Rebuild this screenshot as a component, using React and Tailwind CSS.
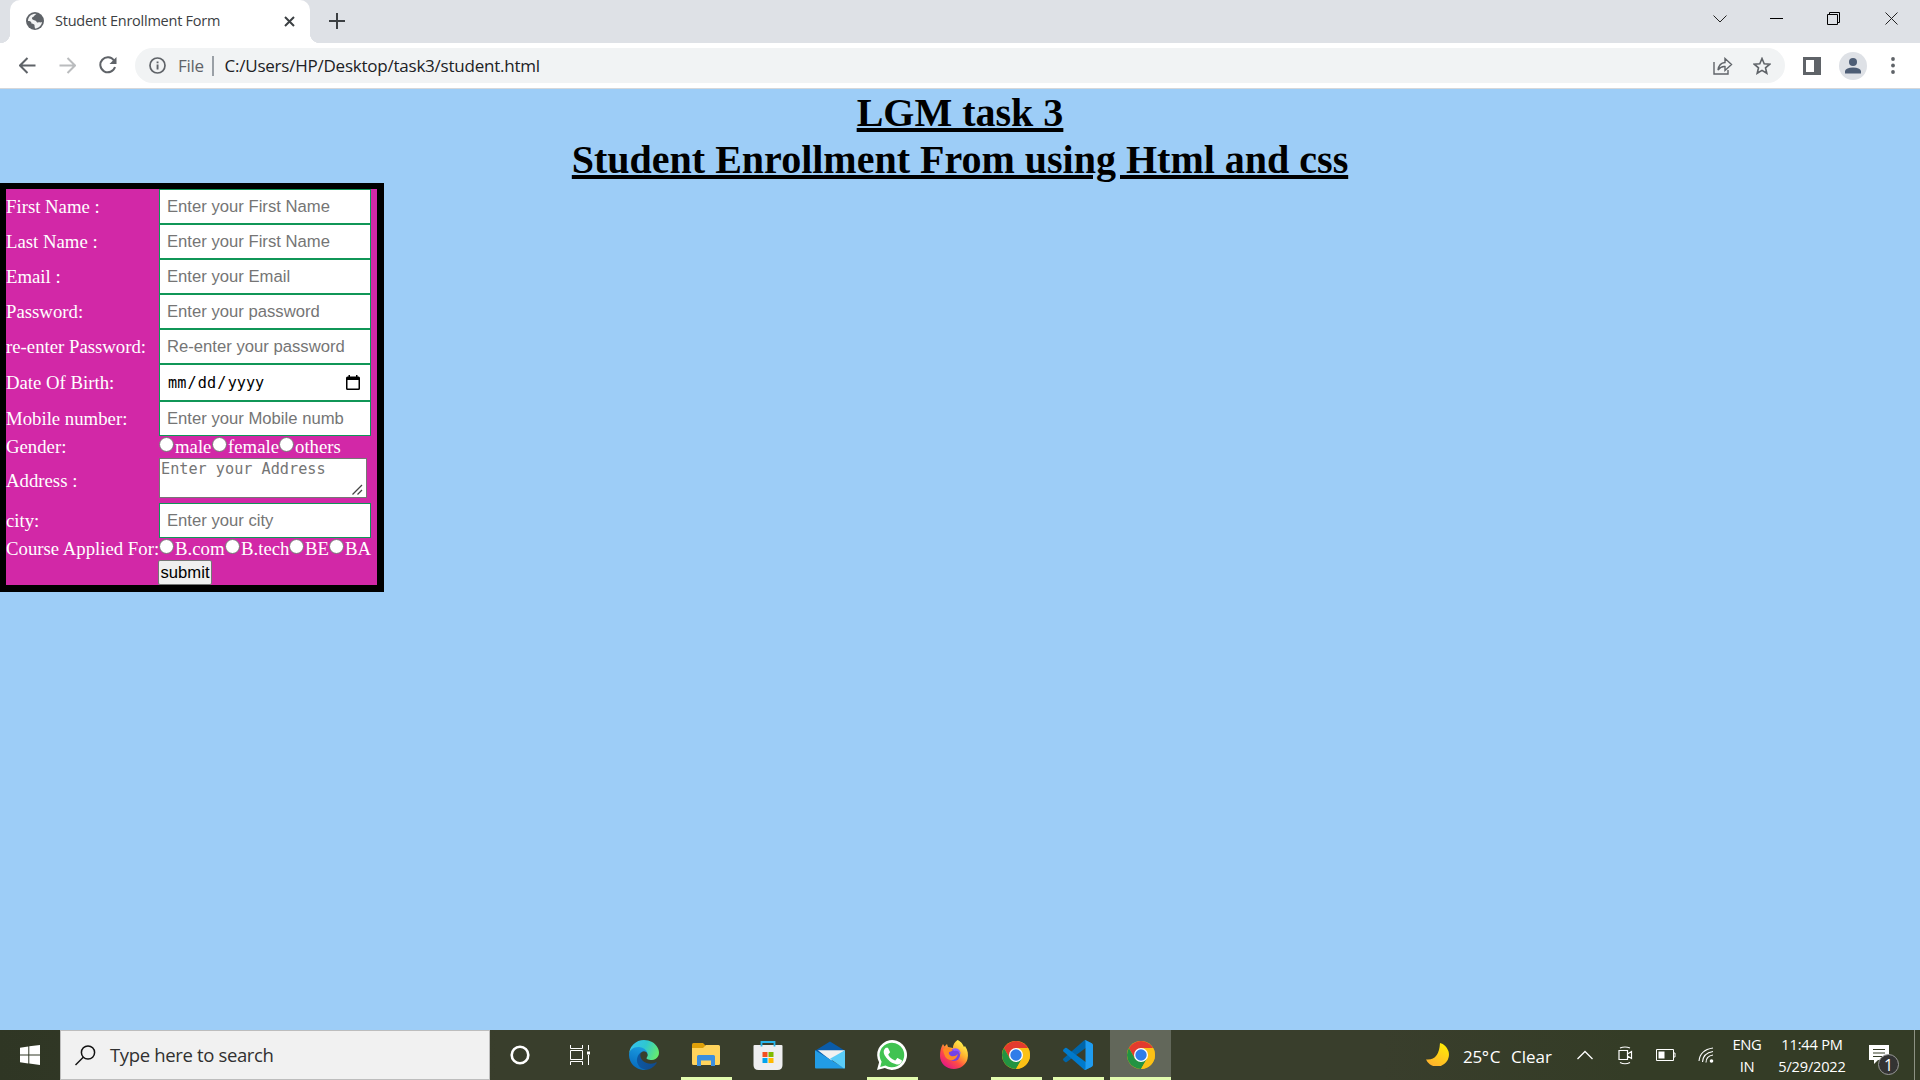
import React from "react";

const ui = "font-['Open_Sans','Noto_Sans',sans-serif]";

const field =
  "block h-[35px] w-[212px] border border-[#109657] bg-white pl-[7px] pr-[7px] font-['Liberation_Sans',Arial,sans-serif] text-[16.67px] placeholder:text-[#757575] outline-none rounded-none";

function Label({ children }) {
  return <div className="w-[153px] shrink-0 whitespace-nowrap">{children}</div>;
}

function Row({ label, placeholder }) {
  return (
    <div className="flex h-[35px] items-center">
      <Label>{label}</Label>
      <input className={field} placeholder={placeholder} />
    </div>
  );
}

function Radio({ text, width }) {
  return (
    <label className="flex shrink-0 items-start" style={{ width }}>
      <span className="mt-px mr-px h-[15px] w-[15px] shrink-0 rounded-full border border-[#767676] bg-white" />
      <span className="whitespace-nowrap leading-[22px]">{text}</span>
    </label>
  );
}

function Form() {
  return (
    <form className="h-[409px] w-[384px] border-[6px] border-r-[7px] border-b-[7px] border-black bg-[#d228a7] font-['Liberation_Serif','Times_New_Roman',serif] text-[18.75px] leading-[22px] text-white">
      <Row label="First Name :" placeholder="Enter your First Name" />
      <Row label="Last Name :" placeholder="Enter your First Name" />
      <Row label="Email :" placeholder="Enter your Email" />
      <Row label="Password:" placeholder="Enter your password" />
      <Row label="re-enter Password:" placeholder="Re-enter your password" />
      <div className="flex h-[37px] items-center">
        <Label>Date Of Birth:</Label>
        <div className="flex h-[37px] w-[212px] items-center justify-between border border-[#109657] bg-white pl-2 pr-[10px] text-black">
          <span className="font-['DejaVu_Sans_Mono',monospace] text-[15.2px]">
            mm<span className="mx-[1.2px]">/</span>dd<span className="mx-[1.2px]">/</span>yyyy
          </span>
          <svg width="14" height="15" viewBox="0 0 14 15" className="-mt-px">
            <path d="M2.500 0h1.500v1.500h6V0h1.500v1.500H12.500Q14 1.500 14 3V13.500Q14 15 12.500 15H1.500Q0 15 0 13.500V3Q0 1.500 1.500 1.500H2.500ZM1.500 5V13.500H12.500V5Z" fill="#000" fillRule="evenodd" />
          </svg>
        </div>
      </div>
      <Row label="Mobile number:" placeholder="Enter your Mobile numb" />
      <div className="flex h-[22px] items-center">
        <Label>Gender:</Label>
        <Radio text="male" width={53} />
        <Radio text="female" width={67} />
        <Radio text="others" width={60} />
      </div>
      <div className="flex h-[45px] items-start">
        <Label><span className="block pt-3">Address :</span></Label>
        <div className="flex h-[40px] w-[208px] items-start justify-between border border-[#767676] bg-white pl-px font-['DejaVu_Sans_Mono',monospace] text-[15.2px] leading-[20px] text-[#757575]">
          <span className="whitespace-nowrap">Enter your Address</span>
          <svg width="11" height="11" viewBox="0 0 11 11" className="mr-[3px] mt-[25px] shrink-0">
            <path d="M.5 10.500 10 1M5.500 10.500 10 6" stroke="#444" strokeWidth="1.300" fill="none" />
          </svg>
        </div>
      </div>
      <Row label="city:" placeholder="Enter your city" />
      <div className="flex h-[22px] items-center">
        <Label>Course Applied For:</Label>
        <Radio text="B.com" width={66} />
        <Radio text="B.tech" width={64} />
        <Radio text="BE" width={40} />
        <Radio text="BA" width={42} />
      </div>
      <button type="button" className="ml-[152px] block h-[25px] w-[54px] rounded-[2px] border border-[#767676] bg-[#efefef] text-center font-['Liberation_Sans',Arial,sans-serif] text-[16.67px] leading-[23px] text-black">
        submit
      </button>
    </form>
  );
}

function Chrome() {
  return (
    <svg width="28" height="28" viewBox="0 0 28 28">
      <circle cx="14" cy="14" r="14" fill="#fbbc09" />
      <path d="M1.880 7A14 14 0 0 1 26.120 7H14L7.940 17.500Z" fill="#e33b2e" />
      <path d="M1.880 7A14 14 0 0 0 14 28L20.060 17.500 14 14 7.940 17.500Z" fill="#229342" />
      <path d="M14 28A14 14 0 0 0 26.120 7H14L20.060 17.500Z" fill="#fbc116" />
      <circle cx="14" cy="14" r="7" fill="#fff" />
      <circle cx="14" cy="14" r="5.700" fill="#2f7de9" />
    </svg>
  );
}

function Edge() {
  return (
    <svg width="30" height="30" viewBox="0 0 256 256">
      <defs>
        <linearGradient id="e1" x1="0" y1="0" x2="1" y2="0"><stop stopColor="#0c59a4" /><stop offset="1" stopColor="#114a8b" /></linearGradient>
        <linearGradient id="e2" x1=".6" y1="0" x2=".3" y2="1"><stop stopColor="#1b9de2" /><stop offset="1" stopColor="#0669bc" /></linearGradient>
        <linearGradient id="e3" x1="0" y1=".3" x2="1" y2=".6"><stop stopColor="#35c1f1" /><stop offset=".5" stopColor="#2fc7cf" /><stop offset="1" stopColor="#66eb6e" /></linearGradient>
      </defs>
      <path fill="url(#e1)" d="M231 190.500c-3.400 1.800-6.900 3.400-10.500 4.700a101.700 101.700 0 0 1-35.900 6.500c-47.300 0-88.500-32.500-88.500-74.300a31.500 31.500 0 0 1 16.400-27.300c-42.800 1.800-53.800 46.400-53.800 72.500 0 74 68.100 81.400 82.800 81.400 7.900 0 19.800-2.300 27-4.600l1.300-.4a128.300 128.300 0 0 0 66.600-52.800 4 4 0 0 0-5.400-5.700z" />
      <path fill="url(#e2)" d="M105.700 241.400a79.200 79.200 0 0 1-22.700-21.300 80.700 80.700 0 0 1 29.500-120c3.200-1.500 8.500-4.200 15.600-4.100a32.400 32.400 0 0 1 25.700 13 31.900 31.900 0 0 1 6.300 18.700c0-.2 24.500-79.600-80-79.600-43.900 0-80 41.700-80 78.200a130.200 130.200 0 0 0 12.100 56 128 128 0 0 0 156.400 67 75.500 75.500 0 0 1-62.800-8z" />
      <path fill="url(#e3)" d="M152.300 148.900c-.9 1-3.400 2.500-3.400 5.600 0 2.600 1.700 5.200 4.800 7.300 14.300 10 41.400 8.600 41.500 8.600a59.600 59.600 0 0 0 30.300-8.300 61.400 61.400 0 0 0 30.400-52.900c.3-22.400-8-37.300-11.300-43.900C223.500 23.900 177.700 0 128 0A128 128 0 0 0 0 126.200c.5-36.500 36.800-66 80-66 3.500 0 23.500.3 42 10 16.300 8.600 24.900 18.900 30.800 29.200 6.200 10.700 7.300 24.100 7.300 29.500s-2.700 13.300-7.800 20z" />
    </svg>
  );
}

function Explorer() {
  return (
    <svg width="28" height="24" viewBox="0 0 28 24">
      <path d="M0 1.500Q0 0 1.500 0H11l3 3v3H0Z" fill="#dfa009" />
      <path d="M0 5H11l3-3H26.500Q28 2 28 3.500V20.500Q28 22 26.500 22H1.500Q0 22 0 20.500Z" fill="#ffd35c" />
      <path d="M5 23V13.500Q5 12 6.500 12H21.500Q23 12 23 13.500V23H19V17.500H9V23Z" fill="#3b8ede" />
    </svg>
  );
}

function Store() {
  return (
    <svg width="30" height="30" viewBox="0 0 30 30">
      <path d="M.5 6Q.5 5 1.500 5H28.500Q29.500 5 29.500 6V25Q29.500 30 24.500 30H5.500Q.5 30 .5 25Z" fill="#eeeef0" />
      <path d="M8.500 6.500V2H21.500V6.500" stroke="#27b5ed" strokeWidth="1.800" fill="none" />
      <path fill="#f25022" d="M9.500 12h5v5h-5z" /><path fill="#7fba00" d="M15.500 12h5v5h-5z" />
      <path fill="#00a4ef" d="M9.500 18h5v5h-5z" /><path fill="#ffb900" d="M15.500 18h5v5h-5z" />
    </svg>
  );
}

function Mail() {
  return (
    <svg width="30" height="28" viewBox="0 0 31 28">
      <path d="M0 9.500 15.500 0 31 9.500V20H0Z" fill="#0a5ba8" />
      <path d="M3 9H31L17 20Z" fill="#f1f1f1" />
      <path d="M0 9 31 28H1Q0 28 0 27Z" fill="#229ce6" />
      <path d="M31 9V27Q31 28 30 28L15.500 18Z" fill="#5accf8" />
    </svg>
  );
}

function WhatsApp() {
  return (
    <svg width="30" height="30" viewBox="0 0 30 30">
      <path d="M0 30 2.100 22.300A14.900 14.900 0 1 1 7.800 28Z" fill="#fff" />
      <path d="M3.200 26.900 4.600 21.700A12.300 12.300 0 1 1 8.500 25.500Z" fill="#40c351" />
      <path fill="#fff" d="M11.300 8.400c-.3-.7-.6-.7-1-.7h-.8c-.3 0-.8.100-1.200.6-.4.500-1.600 1.500-1.600 3.700s1.600 4.300 1.800 4.600c.2.300 3.100 4.900 7.600 6.700 3.800 1.500 4.500 1.200 5.400 1.100.800-.1 2.600-1.100 3-2.100.4-1 .4-1.900.3-2.100-.1-.2-.4-.3-.9-.5s-2.600-1.300-3-1.500c-.4-.1-.7-.2-1 .3-.3.400-1.200 1.500-1.400 1.700-.3.300-.5.300-1 .1-.4-.2-1.900-.7-3.600-2.200-1.300-1.200-2.200-2.700-2.500-3.100-.2-.4 0-.7.200-.9l1.300-1.600c.2-.3.100-.6 0-.8Z" />
    </svg>
  );
}

function Firefox() {
  return (
    <svg width="30" height="30" viewBox="0 0 30 30">
      <defs>
        <linearGradient id="f1" x1=".85" y1=".1" x2=".2" y2=".95"><stop stopColor="#fff44f" /><stop offset=".35" stopColor="#ffb02e" /><stop offset=".65" stopColor="#ff4d44" /><stop offset="1" stopColor="#e31587" /></linearGradient>
      </defs>
      <path d="M18.500 0C23 2 24 5 25 7L26 6C29 10 29.500 15 28.500 19 27 25 21 29 15 29 7 29 1 23 1 16 1 11 2 7 4 4L5.500 6.500 8 4 9 7 14 8Q14 3 18.500 0Z" fill="url(#f1)" />
      <circle cx="15" cy="15" r="6" fill="#7542e5" />
      <path d="M4 9Q9 6 14 10 12 12 10 12 9 14 12 16 16 17 19 14 17 21 11 20 5 19 4 9Z" fill="#ff8a24" />
      <path d="M13 9Q21 6 22 15 20 10 15 11Z" fill="#9059ff" />
    </svg>
  );
}

function VsCode() {
  return (
    <svg width="30" height="30" viewBox="0 0 100 100">
      <path d="M96 11 75.500 1Q72 0 69 2.500L1.500 62Q-1 65 1.500 68L7 73Q9.500 75 12.500 73L93.500 13Q97 11 98 14Z" fill="#0065a9" />
      <path d="M96 89 75.500 99Q72 100 69 97.500L1.500 38Q-1 35 1.500 32L7 27Q9.500 25 12.500 27L93.500 87Z" fill="#007acc" />
      <path d="M75.500 99Q72 100 69 97.500 75 100 75 94V6Q75 0 69 2.500 72 0 75.500 1L96 11Q100 13 100 17V83Q100 87 96 89Z" fill="#1f9cf0" />
    </svg>
  );
}

function Task({ children, open, active }) {
  return (
    <div className={"flex h-[50px] shrink-0 flex-col items-center " + (active ? "ml-px w-[61px] bg-[#62675a]" : "w-[62px]")}>
      <div className="flex h-[47px] items-center justify-center pt-[3px]">{children}</div>
      {(open || active) && <div className={"h-[3px] bg-[#e2fbae] " + (active ? "w-[61px]" : "w-[51px]")} />}
    </div>
  );
}

function Browser() {
  return (
    <header className={ui}>
      <div className="flex h-[43px] bg-[#dee1e6] pl-[10px]">
        <div className="relative flex h-[43px] w-[300px] items-center rounded-t-[10px] bg-white pl-4 before:absolute before:-left-[10px] before:bottom-0 before:h-[10px] before:w-[10px] before:bg-[radial-gradient(circle_at_0_0,transparent_10px,white_10.5px)] after:absolute after:-right-[10px] after:bottom-0 after:h-[10px] after:w-[10px] after:bg-[radial-gradient(circle_at_100%_0,transparent_10px,white_10.5px)]">
          <svg width="18" height="18" viewBox="0 0 18 18" className="-mt-px">
            <circle cx="9" cy="9" r="9" fill="#5f6368" />
            <path d="M10.500 2C8 3 8 5 6 5.500 5.500 7 7 8 9 8.500 11 9 10 10.500 12 10.500 14 10 14.500 11 16 10 15.500 14 12 16.500 9 16.500 L8.500 14C9 12 7 12 5.500 11.500 5.500 9.500 4 9 2 9 2 5 5 2 9 1.800Z" fill="#fff" opacity=".92" />
            <path d="M11 2C9 4 10 5 8 6 8 7.500 9.500 7.500 11 7.500 11.500 9 13 9 14 9L16 9Q16 4 11 2Z" fill="#5f6368" />
          </svg>
          <span className="ml-[11px] w-[229px] -mt-px shrink-0 whitespace-nowrap text-[14.5px] text-[#3c4043] tracking-[-0.24px]">Student Enrollment Form</span>
          <svg width="11" height="11" viewBox="0 0 11 11" className="shrink-0"><path d="m1 1 9 9M10 1 1 10" stroke="#3c4043" strokeWidth="2" /></svg>
        </div>
        <svg width="16" height="16" viewBox="0 0 16 16" className="ml-[19px] mt-[13px]"><path d="M8 0v16M0 8h16" stroke="#3c4043" strokeWidth="2" /></svg>
        <div className="ml-auto flex items-start pt-[12px]">
          <svg width="14" height="14" viewBox="0 0 14 14" className="mr-[43px]"><path d="m.5 3.500 6.500 6.500 6.500-6.500" stroke="#222" fill="none" /></svg>
          <svg width="14" height="14" viewBox="0 0 14 14" className="mr-[43px]"><path d="M0 6.500h13" stroke="#000" /></svg>
          <svg width="14" height="14" viewBox="0 0 14 14" className="mr-[44px]"><path d="M.5 2.500h10v10h-10zM2.500 2.500V.5h10v10h-2" stroke="#000" fill="none" /></svg>
          <svg width="14" height="14" viewBox="0 0 14 14" className="mr-[21px]"><path d="m.5.500 12 12M12.500.500l-12 12" stroke="#222" fill="none" /></svg>
        </div>
      </div>
      <div className="flex h-[46px] items-center border-b border-[#d5d7da] bg-white pl-[19px]">
        <svg width="17" height="17" viewBox="0 0 17 17" className="-mt-px"><path d="M16.500 8.500H1.500M8.500 1 1 8.500l7.500 7.500" stroke="#5f6368" strokeWidth="2" fill="none" /></svg>
        <svg width="17" height="17" viewBox="0 0 17 17" className="ml-[23px] -mt-px"><path d="M.5 8.500H15.500M8.500 1 16 8.500 8.500 16" stroke="#babcbe" strokeWidth="2" fill="none" /></svg>
        <svg width="18" height="18" viewBox="0 0 18 18" className="ml-[23px] -mt-px"><path d="M15 4.500A7.500 7.500 0 1 0 16 11" stroke="#5f6368" strokeWidth="2" fill="none" /><path d="M17.500 1v7h-7Z" fill="#5f6368" /></svg>
        <div className="ml-[18px] flex h-[35px] w-[1650px] items-center rounded-full bg-[#f1f3f4] pl-[14px] pr-[16px]">
          <svg width="17" height="17" viewBox="0 0 17 17"><circle cx="8.500" cy="8.500" r="7.500" fill="none" stroke="#5f6368" strokeWidth="1.700" /><path d="M7.600 7.500h1.900v5H7.600zM7.600 4.400h1.900v1.900H7.600z" fill="#5f6368" /></svg>
          <span className="ml-[12px] w-[34px] whitespace-nowrap text-[17px] tracking-[-0.25px] text-[#5f6368]">File</span>
          <span className="h-[20px] w-[1.500px] bg-[#9aa0a6]" />
          <span className="ml-[11px] whitespace-nowrap text-[17px] tracking-[-0.23px] text-[#202124]">C:/Users/HP/Desktop/task3/student.html</span>
          <svg width="20" height="18" viewBox="0 0 20 18" className="ml-auto"><path d="M1 5v12h14v-4M5 13Q6 6 12 5.500V1.500l6.500 6-6.500 6V9.500Q8 9 5 13Z" stroke="#5f6368" strokeWidth="1.400" fill="none" /></svg>
          <svg width="18" height="18" viewBox="0 0 18 18" className="ml-[20px] mr-[-2px]"><path d="m9 1.500 2.200 5.200 5.500.5-4.200 3.600 1.300 5.500L9 13.400l-4.800 2.900 1.300-5.500-4.200-3.600 5.500-.5Z" stroke="#5f6368" strokeWidth="1.600" fill="none" /></svg>
        </div>
        <svg width="18" height="18" viewBox="0 0 18 18" className="ml-[18px]"><path d="M0 0h18v18H0zM3 3v12h8V3Z" fill="#5f6368" fillRule="evenodd" /></svg>
        <svg width="28" height="28" viewBox="0 0 28 28" className="ml-[18px]"><circle cx="14" cy="14" r="14" fill="#dee1e6" /><circle cx="14" cy="10" r="4" fill="#4d5d75" /><path d="M6 21.500V19q1-3.500 8-3.500T22 19v2.500Z" fill="#4d5d75" /></svg>
        <svg width="4" height="17" viewBox="0 0 4 17" className="ml-[24px]"><circle cx="2" cy="2" r="1.900" fill="#5f6368" /><circle cx="2" cy="8.500" r="1.900" fill="#5f6368" /><circle cx="2" cy="15" r="1.900" fill="#5f6368" /></svg>
      </div>
    </header>
  );
}

function Taskbar() {
  return (
    <footer className={"flex h-[50px] w-full bg-[linear-gradient(90deg,#2f3624,#393e2c_26%,#393e2c_72%,#343c26_85%,#343c26)] " + ui}>
      <div className="flex w-[60px] items-center justify-center">
        <svg width="20" height="20" viewBox="0 0 20 20"><path d="M0 2.800 8.300 1.500V9.500H0ZM9.300 1.300 20 0v9.500H9.300ZM0 10.500h8.300v8L0 17.200ZM9.300 10.500H20V20L9.300 18.600Z" fill="#fff" /></svg>
      </div>
      <div className="flex w-[430px] items-center border border-[#bdbdbd] bg-[#f1f1f1] pl-[14px]">
        <svg width="21" height="21" viewBox="0 0 21 21"><circle cx="13" cy="7.500" r="6.600" fill="none" stroke="#111" strokeWidth="1.500" /><path d="M8.500 12 .5 20" stroke="#111" strokeWidth="1.500" /></svg>
        <span className="ml-[14px] whitespace-nowrap text-[18.500px] tracking-[-0.35px] text-[#303030]">Type here to search</span>
      </div>
      <div className="flex w-[60px] items-center justify-center"><svg width="20" height="20" viewBox="0 0 20 20"><circle cx="10" cy="10" r="8.300" fill="none" stroke="#fff" strokeWidth="2.600" /></svg></div>
      <div className="flex w-[63px] items-center justify-center">
        <svg width="20" height="20" viewBox="0 0 20 20" className="-ml-[3px]"><path d="M.5 0v3.500h12V0M.5 20v-3.500h12V20M.5 5.500h12v9H.5zM18.500 0v5M18.500 10v10" stroke="#fff" fill="none" /><path d="M17 6.500h3v3h-3z" fill="#fff" /></svg>
      </div>
      <Task><Edge /></Task>
      <Task open><Explorer /></Task>
      <Task><div className="-ml-px"><Store /></div></Task>
      <Task><Mail /></Task>
      <Task open><WhatsApp /></Task>
      <Task><Firefox /></Task>
      <Task open><Chrome /></Task>
      <Task open><VsCode /></Task>
      <Task active><Chrome /></Task>
      <div className="ml-auto flex items-center text-white">
        <svg width="23" height="23" viewBox="0 0 23 23" className="-ml-px mr-px -mt-px"><defs><linearGradient id="moon" x1="1" y1="0" x2=".5" y2="1"><stop stopColor="#fff200" /><stop offset="1" stopColor="#ffb52b" /></linearGradient></defs><path d="M14 0A12 12 0 1 1 0 16.500Q13 18 14 0Z" fill="url(#moon)" /></svg>
        <span className="ml-[13px] w-[48px] whitespace-nowrap pt-[3px] text-[17px] tracking-[-0.3px]">25°<span className="ml-px">C</span></span>
        <span className="w-[66px] whitespace-nowrap pt-[3px] text-[17px] tracking-[0px]">Clear</span>
        <svg width="16" height="10" viewBox="0 0 16 10"><path d="m.5 9 7.500-7.500L15.500 9" stroke="#fff" strokeWidth="1.300" fill="none" /></svg>
        <svg width="15" height="19" viewBox="0 0 15 19" className="ml-[25px]"><path d="M1 4.500h8.500v9H1zM9.500 8l4-2.500v7l-4-2.500M2 2Q7 0 12 2M2 16.500Q7 19 12 16.500" stroke="#fff" strokeWidth="1.200" fill="none" /></svg>
        <svg width="20" height="12" viewBox="0 0 20 12" className="ml-[23px]"><path d="M.5.500h17v11H.500zM17.500 4h1.500v4h-1.500" stroke="#fff" fill="none" /><path d="M2.500 2.500h6v7h-6z" fill="#fff" /></svg>
        <svg width="16" height="16" viewBox="0 0 16 16" className="ml-[22px]"><g fill="none" stroke="#fff" strokeWidth="1.100"><path d="M1 14Q2 3 15 1M4.500 15Q5 6 15 4.500M8 15.500Q8 9 15 8" /></g><circle cx="13.500" cy="14" r="1.800" fill="#fff" /></svg>
        <div className="ml-[13px] flex w-[40px] flex-col items-center text-[14.800px] leading-[22px] tracking-[-0.4px]"><span>ENG</span><span>IN</span></div>
        <div className="ml-[5px] flex w-[80px] flex-col items-center whitespace-nowrap text-[14.600px] leading-[22px] tracking-[-0.2px]"><span>11:44 PM</span><span>5/29/2022</span></div>
        <div className="relative ml-[17px] mt-[10px] h-[30px] w-[30px]">
          <svg width="20" height="20" viewBox="0 0 20 20"><path d="M0 0h20v15H9l-4 4v-4H0Z" fill="#fff" /><path d="M4 4.500h12M4 8h12M4 11.500h9" stroke="#343c26" strokeWidth="1.200" /></svg>
          <span className="absolute left-[9px] top-[9px] flex h-[21px] w-[21px] items-center justify-center rounded-full border border-[#999] bg-[#333] text-[16px] leading-none">1</span>
        </div>
        <div className="ml-[15px] mr-[5px] h-[50px] w-px bg-[#8d9283]" />
      </div>
    </footer>
  );
}

export default function App() {
  return (
    <div className="flex h-[1080px] w-[1920px] flex-col overflow-hidden bg-[#9dcdf7]">
      <Browser />
      <main className="flex-1">
        <h1 className="h-[94px] text-center font-['Liberation_Serif','Times_New_Roman',serif] text-[40px] font-bold leading-[47px] text-black underline decoration-[4px] underline-offset-[2px]">
          LGM task 3<br />Student Enrollment From using Html and css
        </h1>
        <Form />
      </main>
      <Taskbar />
    </div>
  );
}
